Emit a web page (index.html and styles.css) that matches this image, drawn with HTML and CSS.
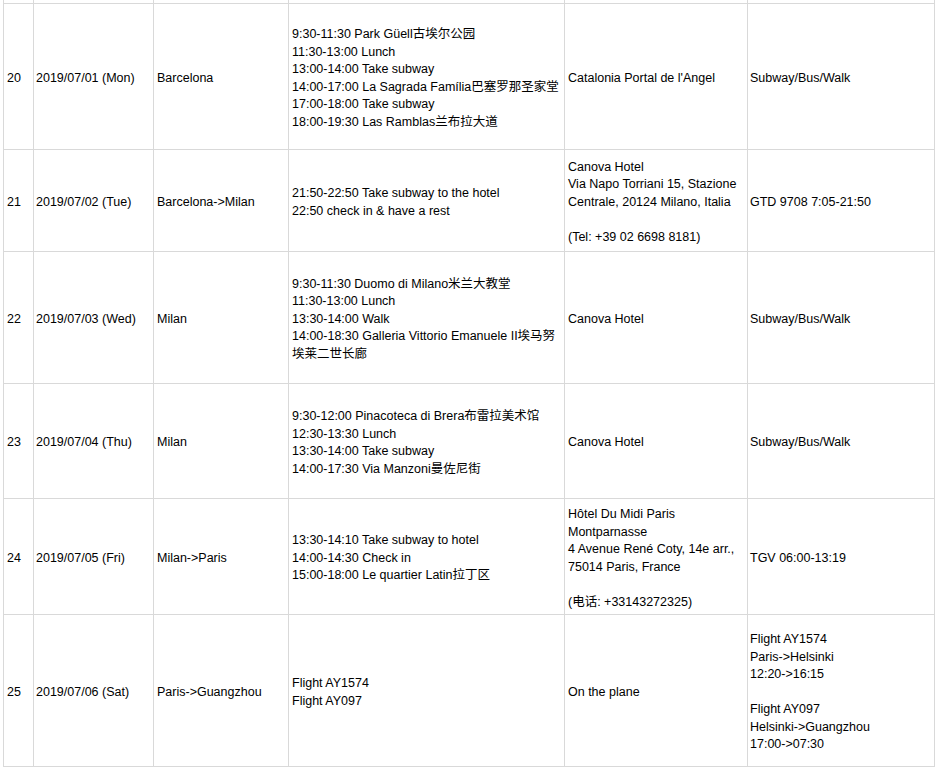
FILE: index.html
```html
<!DOCTYPE html>
<html>
<head>
<meta charset="utf-8">
<link rel="stylesheet" href="styles.css">
</head>
<body>
<table class="sheet">
  <colgroup>
    <col class="c-no"><col class="c-date"><col class="c-city"><col class="c-plan"><col class="c-hotel"><col class="c-trans">
  </colgroup>
  <tr class="r-prev"><td></td><td></td><td></td><td></td><td></td><td></td></tr>
  <tr class="r20">
    <td>20</td>
    <td>2019/07/01 (Mon)</td>
    <td>Barcelona</td>
    <td>9:30-11:30 Park Güell古埃尔公园<br>11:30-13:00 Lunch<br>13:00-14:00 Take subway<br>14:00-17:00 La Sagrada Família巴塞罗那圣家堂<br>17:00-18:00 Take subway<br>18:00-19:30 Las Ramblas兰布拉大道</td>
    <td>Catalonia Portal de l'Angel</td>
    <td>Subway/Bus/Walk</td>
  </tr>
  <tr class="r21">
    <td>21</td>
    <td>2019/07/02 (Tue)</td>
    <td>Barcelona-&gt;Milan</td>
    <td>21:50-22:50 Take subway to the hotel<br>22:50 check in &amp; have a rest</td>
    <td>Canova Hotel<br>Via Napo Torriani 15, Stazione<br>Centrale, 20124 Milano, Italia<br><br>(Tel: +39 02 6698 8181)</td>
    <td>GTD 9708 7:05-21:50</td>
  </tr>
  <tr class="r22">
    <td>22</td>
    <td>2019/07/03 (Wed)</td>
    <td>Milan</td>
    <td>9:30-11:30 Duomo di Milano米兰大教堂<br>11:30-13:00 Lunch<br>13:30-14:00 Walk<br>14:00-18:30 Galleria Vittorio Emanuele II埃马努<br>埃莱二世长廊</td>
    <td>Canova Hotel</td>
    <td>Subway/Bus/Walk</td>
  </tr>
  <tr class="r23">
    <td>23</td>
    <td>2019/07/04 (Thu)</td>
    <td>Milan</td>
    <td>9:30-12:00 Pinacoteca di Brera布雷拉美术馆<br>12:30-13:30 Lunch<br>13:30-14:00 Take subway<br>14:00-17:30 Via Manzoni曼佐尼街</td>
    <td>Canova Hotel</td>
    <td>Subway/Bus/Walk</td>
  </tr>
  <tr class="r24">
    <td>24</td>
    <td>2019/07/05 (Fri)</td>
    <td>Milan-&gt;Paris</td>
    <td>13:30-14:10 Take subway to hotel<br>14:00-14:30 Check in<br>15:00-18:00 Le quartier Latin拉丁区</td>
    <td>Hôtel Du Midi Paris<br>Montparnasse<br>4 Avenue René Coty, 14e arr.,<br>75014 Paris, France<br><br>(电话: +33143272325)</td>
    <td>TGV 06:00-13:19</td>
  </tr>
  <tr class="r25">
    <td>25</td>
    <td>2019/07/06 (Sat)</td>
    <td>Paris-&gt;Guangzhou</td>
    <td>Flight AY1574<br>Flight AY097</td>
    <td>On the plane</td>
    <td>Flight AY1574<br>Paris-&gt;Helsinki<br>12:20-&gt;16:15<br><br>Flight AY097<br>Helsinki-&gt;Guangzhou<br>17:00-&gt;07:30</td>
  </tr>
</table>
</body>
</html>
```
FILE: styles.css
```css
html, body {
  margin: 0;
  padding: 0;
  background: #ffffff;
}

.sheet {
  margin-left: 3px;
  border-collapse: collapse;
  table-layout: fixed;
  width: 932px;
  font-family: "Liberation Sans", Arial, "Noto Sans CJK SC", sans-serif;
  font-size: 12.5px;
  line-height: 17.5px;
  color: #000000;
}

.c-no { width: 30px; }
.c-date { width: 120px; }
.c-city { width: 135px; }
.c-plan { width: 276px; }
.c-hotel { width: 183px; }
.c-trans { width: 187px; }

.sheet td {
  border: 1px solid #d9d9d9;
  padding: 4px 3px 0 3px;
  vertical-align: middle;
  white-space: nowrap;
  overflow: hidden;
}

.sheet td:nth-child(2),
.sheet td:nth-child(6) {
  padding-left: 2px;
}

.r-prev td {
  border-top: none;
  height: 3px;
  padding: 0;
}

.r20 td { height: 141px; }
.r21 td { height: 97px; }
.r22 td { height: 127px; }
.r23 td { height: 110px; }
.r24 td { height: 111px; }
.r25 td { height: 147px; }
```
